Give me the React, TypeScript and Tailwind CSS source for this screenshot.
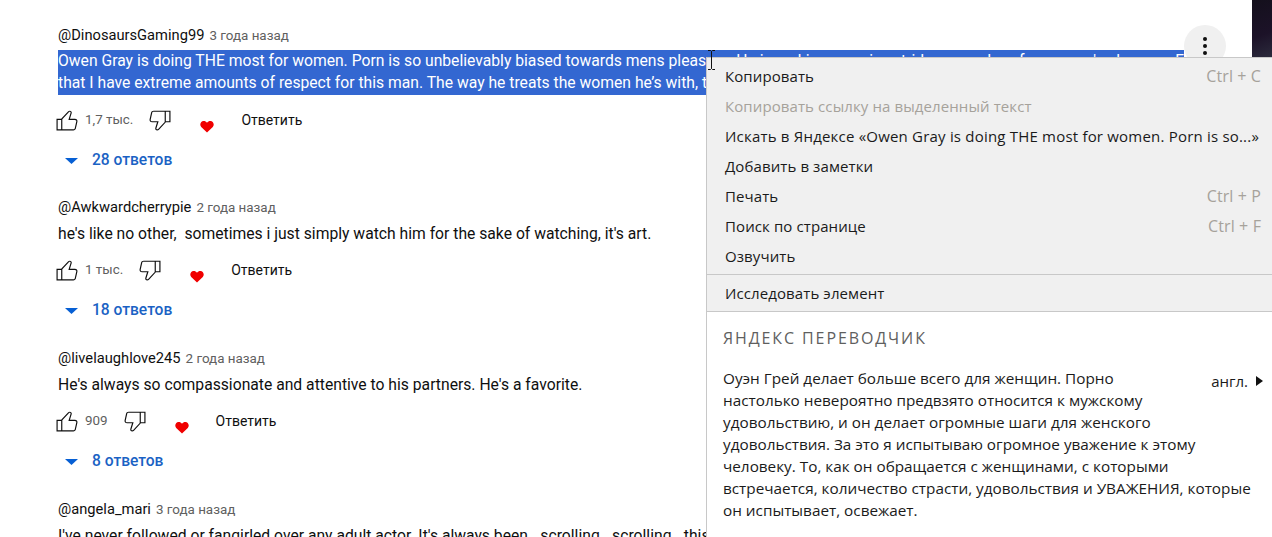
import React from 'react';

const LIKE = 'M18.77,11h-4.23l1.52-4.94C16.38,5.03,15.54,4,14.38,4c-0.58,0-1.14,0.24-1.52,0.65L7,11H3v10h4h1h9.43c1.06,0,1.98-0.67,2.19-1.61l1.34-6C21.23,12.15,20.18,11,18.77,11z M7,20H4v-8h3V20z M19.98,13.17l-1.34,6C18.54,19.65,18.03,20,17.43,20H8v-8.61l5.6-6.06C13.79,5.12,14.08,5,14.38,5c0.26,0,0.5,0.11,0.63,0.3c0.07,0.1,0.15,0.26,0.09,0.47l-1.52,4.94L13.18,12h1.35h4.23c0.41,0,0.8,0.17,1.03,0.46C19.92,12.61,20.05,12.86,19.98,13.17z';
const DISLIKE = 'M17,4h-1H6.57C5.5,4,4.59,4.67,4.38,5.61l-1.34,6C2.77,12.85,3.82,14,5.23,14h4.23l-1.52,4.94C7.62,19.97,8.46,21,9.62,21c0.58,0,1.14-0.24,1.52-0.65L17,14h4V4H17z M10.4,19.67C10.21,19.88,9.92,20,9.62,20c-0.26,0-0.5-0.11-0.63-0.3c-0.07-0.1-0.15-0.26-0.09-0.47l1.52-4.94l0.4-1.29H9.46H5.23c-0.41,0-0.8-0.17-1.03-0.46c-0.12-0.15-0.25-0.4-0.18-0.72l1.34-6C5.46,5.35,5.97,5,6.57,5H16v8.61L10.4,19.67z M20,13h-3V5h3V13z';

const comments = [
  { name: '@Awkwardcherrypie', age: '2 года назад', text: "he's like no other,  sometimes i just simply watch him for the sake of watching, it's art.", likes: '1 тыс.', replies: '18 ответов' },
  { name: '@livelaughlove245', age: '2 года назад', text: "He's always so compassionate and attentive to his partners. He's a favorite.", likes: '909', replies: '8 ответов' },
];

const translation = [
  'Оуэн Грей делает больше всего для женщин. Порно',
  'настолько невероятно предвзято относится к мужскому',
  'удовольствию, и он делает огромные шаги для женского',
  'удовольствия. За это я испытываю огромное уважение к этому',
  'человеку. То, как он обращается с женщинами, с которыми',
  'встречается, количество страсти, удовольствия и УВАЖЕНИЯ, которые',
  'он испытывает, освежает.',
];

const menuItems = [
  { label: 'Копировать', keys: 'Ctrl + C' },
  { label: 'Копировать ссылку на выделенный текст', disabled: true },
  { label: 'Искать в Яндексе «Owen Gray is doing THE most for women. Porn is so...»', wide: true },
  { label: 'Добавить в заметки' },
  { label: 'Печать', keys: 'Ctrl + P' },
  { label: 'Поиск по странице', keys: 'Ctrl + F' },
  { label: 'Озвучить' },
];

const Header = ({ name, age }: { name: string; age: string }) => (
  <div className="flex items-baseline h-[22px]">
    <span className="text-[14.7px] text-[#0f0f0f]">{name}</span>
    <span className="ml-[5px] text-[13.4px] text-[#606060]">{age}</span>
  </div>
);

const Actions = ({ likes, replies }: { likes: string; replies: string }) => (
  <>
    <div className="flex items-center h-[28px] mt-[11px] -ml-[5px]">
      <svg width="28" height="28" viewBox="0 0 24 24" fill="#0f0f0f"><path d={LIKE} /></svg>
      <span className="ml-[4px] text-[13.4px] text-[#606060]">{likes}</span>
      <svg className="ml-[13px]" width="28" height="28" viewBox="0 0 24 24" fill="#0f0f0f"><path d={DISLIKE} /></svg>
      <svg className="ml-[26px] mt-[13px]" width="14" height="13" viewBox="0 0 14 13" fill="#f00000">
        <path d="M7 12.6 1.2 6.9C-.3 5.3.1 2.6 2 1.4 3.8.4 5.8 1 7 2.8 8.2 1 10.2.4 12 1.4c1.9 1.2 2.3 3.9.8 5.5z" />
      </svg>
      <span className="ml-[27px] text-[14px] text-[#0f0f0f]">Ответить</span>
    </div>
    <div className="flex items-center h-[22px] mt-[16px] ml-[7px]">
      <svg width="13" height="6" viewBox="0 0 13 6" fill="#065fd4"><path d="M0 0h13L6.5 6z" /></svg>
      <span className="ml-[14px] text-[15.6px] font-medium text-[#1a62c4]">{replies}</span>
    </div>
  </>
);

export default function App() {
  return (
    <div className="relative h-[537px] w-[1272px] overflow-hidden bg-white font-['Roboto',sans-serif]">
      <div className="flex">
        <div className="w-[1252px] pl-[58px] pt-[24px]">
          {/* first comment, text is selected */}
          <div className="relative h-[172px]">
            <Header name="@DinosaursGaming99" age="3 года назад" />
            <div className="w-[1126px] h-[45px] mt-[4px] bg-[#3367d1] text-[15.7px] leading-[22px] text-white whitespace-nowrap overflow-hidden">
              <div>Owen Gray is doing THE most for women. Porn is so unbelievably biased towards mens pleasure. He is making massive strides nowadays for women's pleasure. For</div>
              <div>that I have extreme amounts of respect for this man. The way he treats the women he’s with, the amount of passion</div>
            </div>
            <Actions likes="1,7 тыс." replies="28 ответов" />
            <button className="absolute left-[1126px] top-[1px] flex h-[42px] w-[42px] flex-col items-center justify-center gap-[3.5px] rounded-full bg-[#f0f0f0]">
              <i className="block h-[3.5px] w-[3.5px] rounded-full bg-[#0f0f0f]" />
              <i className="block h-[3.5px] w-[3.5px] rounded-full bg-[#0f0f0f]" />
              <i className="block h-[3.5px] w-[3.5px] rounded-full bg-[#0f0f0f]" />
            </button>
          </div>

          {comments.map((c) => (
            <div key={c.name} className="h-[151px]">
              <Header name={c.name} age={c.age} />
              <div className="h-[22px] mt-[5px] text-[15.7px] leading-[22px] text-[#0f0f0f] whitespace-pre">{c.text}</div>
              <Actions likes={c.likes} replies={c.replies} />
            </div>
          ))}

          <div>
            <Header name="@angela_mari" age="3 года назад" />
            <div className="mt-[5px] text-[15.7px] leading-[22px] text-[#0f0f0f] whitespace-nowrap">I've never followed or fangirled over any adult actor. It's always been...scrolling...scrolling...this</div>
          </div>
        </div>
        <div className="h-[57px] w-[20px] bg-[linear-gradient(160deg,#14101c_0%,#1c1228_60%,#2b2a3c_100%)]" />
      </div>

      {/* context menu over the page */}
      <div className="absolute left-[706px] top-[57px] w-[566px] h-[480px] border-l border-t border-[#c8c8c8] bg-white font-['Open_Sans',sans-serif]">
        <div className="bg-[#f0f0f0] pt-[3px] border-b border-[#c8c8c8] h-[254px]">
          {menuItems.map((m) => (
            <div key={m.label} className={`flex items-center justify-between h-[30px] pl-[18px] pr-[11px] text-[15px] ${m.wide ? 'tracking-[0.2px]' : 'tracking-[0.1px]'}`}>
              <span className={m.disabled ? 'text-[#a6a29b]' : 'text-[#1a1a1a]'}>{m.label}</span>
              {m.keys && <span className="text-[16px] text-[#a6a29b]">{m.keys}</span>}
            </div>
          ))}
          <div className="border-t border-[#c8c8c8] mt-[3px] flex items-center h-[38px] pl-[18px] text-[15px] tracking-[0.1px] text-[#1a1a1a]">Исследовать элемент</div>
        </div>
        <div className="relative pl-[16px] pt-[14px]">
          <div className="text-[16px] tracking-[1.9px] text-[#5f5f5f] leading-[24px]">ЯНДЕКС ПЕРЕВОДЧИК</div>
          <div className="mt-[17px] text-[15.3px] leading-[22px] text-[#1a1a1a]">
            {translation.map((line) => (
              <div key={line}>{line}</div>
            ))}
          </div>
          <div className="absolute right-[9px] top-[58px] flex items-center gap-[8px] text-[15px] text-[#1a1a1a]">
            <span>англ.</span>
            <svg width="7" height="10" viewBox="0 0 7 10" fill="#111"><path d="M0 0l7 5-7 5z" /></svg>
          </div>
        </div>
      </div>

      {/* text cursor */}
      <svg className="absolute left-[707px] top-[50px]" width="9" height="20" viewBox="0 0 9 20" fill="none">
        <path d="M1 .5h2.5l1 1 1-1H8M4.5 1.5v17M1 19.5h2.5l1-1 1 1H8" stroke="#111" strokeWidth="1" />
      </svg>
    </div>
  );
}
